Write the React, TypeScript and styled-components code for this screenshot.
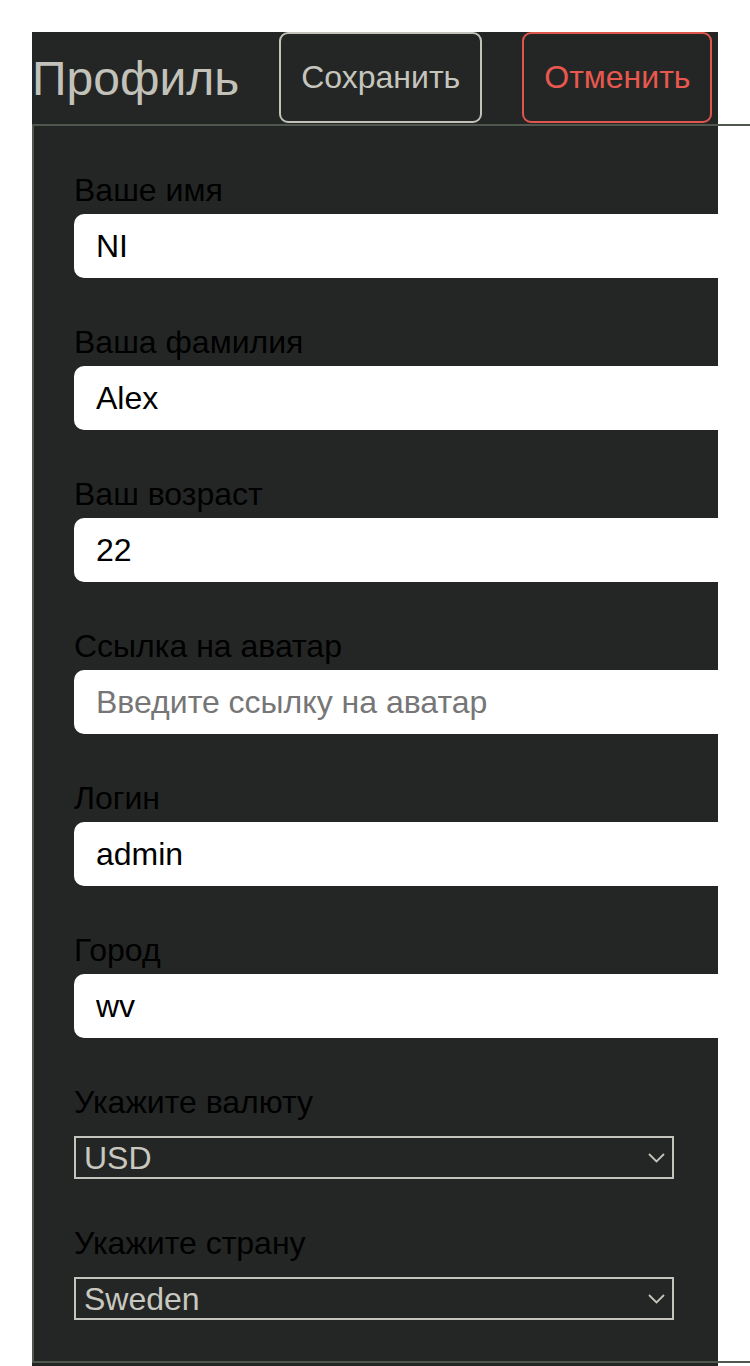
import * as React from 'react'
import styled, { createGlobalStyle } from 'styled-components'

const GlobalStyle = createGlobalStyle`
  html, body {
    margin: 0;
    padding: 0;
    background: #ffffff;
    overflow: hidden;
  }
  body {
    font-family: "Liberation Sans", Arial, sans-serif;
  }
`

const Page = styled('div')`
  padding: 32px 0 0 32px;
`

const Panel = styled('div')`
  width: 686px;
  background-color: #242625;
  padding-bottom: 3px;
`

const Header = styled('div')`
  display: flex;
  align-items: center;
  gap: 40px;
  height: 92px;
`

const Title = styled('h1')`
  margin: 0;
  font-size: 48px;
  font-weight: normal;
  color: #c2c2ba;
`

interface ActionButtonProps {
  $danger?: boolean
}

const ActionButton = styled('button')<ActionButtonProps>`
  align-self: stretch;
  box-sizing: border-box;
  height: 91px;
  padding: 0 20px;
  background: transparent;
  border: 2px solid ${(props: ActionButtonProps) => props.$danger ? '#e0554d' : '#c2c2ba'};
  border-radius: 9px;
  color: ${(props: ActionButtonProps) => props.$danger ? '#e8584f' : '#c5c5bd'};
  font-family: "Liberation Sans", Arial, sans-serif;
  font-size: 32px;
  cursor: pointer;
`

const Card = styled('form')`
  display: flex;
  flex-direction: column;
  gap: 48px;
  width: 718px;
  box-sizing: border-box;
  padding: 48px 0 41px 40px;
  border-top: 2px solid #4f574f;
  border-left: 2px solid #4f574f;
  border-bottom: 2px solid #4f574f;
`

const Field = styled('div')`
  display: flex;
  flex-direction: column;
`

const Label = styled('label')`
  display: block;
  font-size: 32px;
  line-height: 32px;
  color: #000000;
  margin-bottom: 8px;
`

const TextInput = styled('input')`
  box-sizing: border-box;
  width: 100%;
  height: 64px;
  padding: 0 22px;
  border: none;
  border-radius: 10px;
  background: #ffffff;
  color: #000000;
  font-family: "Liberation Sans", Arial, sans-serif;
  font-size: 32px;
  outline: none;

  &::placeholder {
    color: #767676;
  }
`

const SelectWrap = styled('div')`
  position: relative;
  width: 600px;
  margin-top: 10px;
`

const Select = styled('select')`
  appearance: none;
  box-sizing: border-box;
  width: 100%;
  height: 43px;
  padding: 0 40px 0 8px;
  border: 2px solid #c4c4bc;
  border-radius: 0;
  background: transparent;
  color: #c8c8c0;
  font-family: "Liberation Sans", Arial, sans-serif;
  font-size: 32px;
  outline: none;
`

const Chevron = styled('svg')`
  position: absolute;
  right: 9px;
  top: 17px;
  pointer-events: none;
`

const fields = [
  { label: 'Ваше имя', value: 'NI' },
  { label: 'Ваша фамилия', value: 'Alex' },
  { label: 'Ваш возраст', value: '22' },
  { label: 'Ссылка на аватар', value: '', placeholder: 'Введите ссылку на аватар' },
  { label: 'Логин', value: 'admin' },
  { label: 'Город', value: 'wv' },
]

const selects = [
  { label: 'Укажите валюту', value: 'USD', options: ['USD', 'EUR', 'RUB'] },
  { label: 'Укажите страну', value: 'Sweden', options: ['Sweden', 'Russia', 'Belarus'] },
]

export default function App() {
  return (
    <Page>
      <GlobalStyle />
      <Panel>
        <Header>
          <Title>Профиль</Title>
          <ActionButton type="button">Сохранить</ActionButton>
          <ActionButton type="button" $danger>Отменить</ActionButton>
        </Header>
        <Card onSubmit={(e) => e.preventDefault()}>
          {fields.map((f) => (
            <Field key={f.label}>
              <Label>{f.label}</Label>
              <TextInput defaultValue={f.value} placeholder={f.placeholder} />
            </Field>
          ))}
          {selects.map((s) => (
            <Field key={s.label}>
              <Label>{s.label}</Label>
              <SelectWrap>
                <Select defaultValue={s.value}>
                  {s.options.map((o) => (
                    <option key={o} value={o}>{o}</option>
                  ))}
                </Select>
                <Chevron width="17" height="10" viewBox="0 0 17 10">
                  <path d="M1 1 L8.5 8.5 L16 1" fill="none" stroke="#c4c4bc" strokeWidth="1.8" />
                </Chevron>
              </SelectWrap>
            </Field>
          ))}
        </Card>
      </Panel>
    </Page>
  )
}
